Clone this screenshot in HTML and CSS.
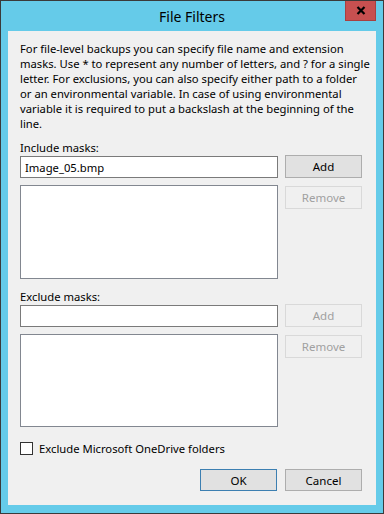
FILE: index.html
```html
<!DOCTYPE html>
<html lang="en">
<head>
    <meta charset="UTF-8">
    <meta name="viewport" content="width=device-width, initial-scale=1.0">
    <title>File Filters</title>
    <link rel="stylesheet" href="styles.css">
</head>
<body>
    <div class="window">
        <div class="titlebar">
            <span></span>
            <div class="title">File Filters</div>
            <button class="close" title="Close">
                <svg width="10" height="9" viewBox="0 0 10 9">
                    <path d="M1.5 1 L8.5 8 M8.5 1 L1.5 8" stroke="#000" stroke-width="2.2" fill="none"/>
                </svg>
            </button>
        </div>

        <div class="client">
            <p class="intro">For file-level backups you can specify file name and extension<br>
                masks. Use * to represent any number of letters, and ? for a single<br>
                letter. For exclusions, you can also specify either path to a folder<br>
                or an environmental variable. In case of using environmental<br>
                variable it is required to put a backslash at the beginning of the<br>
                line.</p>

            <label class="group-label" for="includeMask">Include masks:</label>
            <div class="mask-grid">
                <input type="text" id="includeMask" class="textbox" value="Image_05.bmp">
                <button class="btn">Add</button>
                <div class="listbox"></div>
                <button class="btn" disabled>Remove</button>
            </div>

            <label class="group-label exclude" for="excludeMask">Exclude masks:</label>
            <div class="mask-grid">
                <input type="text" id="excludeMask" class="textbox">
                <button class="btn" disabled>Add</button>
                <div class="listbox short"></div>
                <button class="btn" disabled>Remove</button>
            </div>

            <label class="check">
                <span class="box"></span>
                Exclude Microsoft OneDrive folders
            </label>

            <div class="actions">
                <button class="btn default">OK</button>
                <button class="btn">Cancel</button>
            </div>
        </div>
    </div>
</body>
</html>
```

FILE: styles.css
```css
body {
    margin: 0;
    font-family: "Noto Sans", "Open Sans", sans-serif;
    font-size: 11.25px;
    color: #000;
}

.window {
    width: 384px;
    height: 514px;
    box-sizing: border-box;
    border: 1px solid #3a3a3a;
    background: #65cbe9;
    display: flex;
    flex-direction: column;
}

.titlebar {
    height: 30px;
    display: grid;
    grid-template-columns: 1fr auto 1fr;
}

.title {
    font-size: 14px;
    line-height: 30px;
    padding-top: 1px;
}

.close {
    justify-self: end;
    width: 31px;
    height: 20px;
    margin-right: 7px;
    padding: 0;
    border: 1px solid #a84040;
    border-top: none;
    background: #c75050;
    display: flex;
    align-items: center;
    justify-content: center;
}

.client {
    flex: 1;
    margin: 0 7px 8px 7px;
    background: #f0f0f0;
    padding: 10px 14px 0 12px;
    display: flex;
    flex-direction: column;
}

.intro {
    margin: 0 -14px 0 0;
    line-height: 15px;
    white-space: nowrap;
}

.group-label {
    display: block;
    line-height: 15px;
    margin-top: 9px;
}

.group-label.exclude {
    margin-top: 10px;
}

.mask-grid {
    display: grid;
    grid-template-columns: 258px 77px;
    column-gap: 7px;
    row-gap: 7px;
    align-items: start;
}

.textbox {
    box-sizing: border-box;
    height: 22px;
    margin: 1px 0 0 0;
    padding: 0 4px;
    border: 1px solid #7a7a7a;
    background: #fff;
    font: inherit;
    color: #000;
    outline: none;
}

.listbox {
    box-sizing: border-box;
    height: 94px;
    border: 1px solid #828790;
    background: #fff;
}

.listbox.short {
    height: 93px;
}

.mask-grid .listbox + .btn {
    margin-top: 1px;
}

.btn {
    box-sizing: border-box;
    width: 77px;
    height: 23px;
    padding: 0;
    border: 1px solid #adadad;
    background: #e1e1e1;
    font: inherit;
    font-size: 11.5px;
    color: #000;
}

.btn:disabled {
    background: #f0f0f0;
    border-color: #d9d9d9;
    color: #a0a0a0;
}

.btn.default {
    border-color: #3c7fb1;
}

.check {
    display: flex;
    align-items: center;
    gap: 6px;
    margin-top: 15px;
    line-height: 13px;
}

.box {
    box-sizing: border-box;
    width: 13px;
    height: 13px;
    border: 1px solid #333;
    background: #fff;
}

.actions {
    display: flex;
    justify-content: flex-end;
    gap: 8px;
    margin-top: 14px;
}

.actions .btn {
    height: 22px;
}
```
